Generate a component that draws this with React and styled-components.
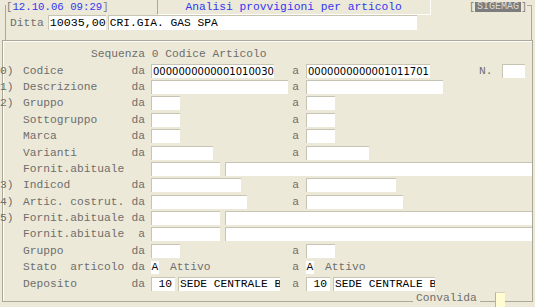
import React from 'react';
import styled, { createGlobalStyle } from 'styled-components';

const MONO = `"Liberation Mono", "Courier New", monospace`;
const SANS = `"DejaVu Sans", Verdana, sans-serif`;

const Global = createGlobalStyle`
  html, body { margin: 0; padding: 0; background: #ece9d8; }
  body { width: 535px; height: 307px; overflow: hidden; }
`;

const Screen = styled.div`
  width: 535px;
  height: 307px;
  overflow: hidden;
  background: #ece9d8;
  font-family: ${MONO};
  font-size: 11.25px;
  color: #6e6e6e;
`;

const HeaderFrame = styled.div`
  margin: 5px 3px 0 5px;
  height: 34px;
  border: 1px solid #aca899;
  border-bottom: none;
`;

const Legend = styled.div`
  display: flex;
  align-items: flex-start;
  height: 15px;
  margin: -6px 4px 0 0;
  background: #ece9d8;
`;

const Stamp = styled.div`
  font-size: 10.7px;
  line-height: 15px;
  color: #808080;
  white-space: pre;
`;

const Blue = styled.span`
  color: #3535f2;
`;

const TitleBox = styled.div`
  box-sizing: border-box;
  width: 274px;
  height: 15px;
  margin-left: 48px;
  border-left: 1px solid #aca899;
  border-right: 1px solid #fdfdfb;
  border-bottom: 1px solid #fdfdfb;
  color: #3535f2;
  text-align: center;
  line-height: 14px;
`;

const Spacer = styled.div`
  flex: 1;
`;

const Tag = styled.div`
  font-size: 10px;
  line-height: 15px;
  color: #808080;
  white-space: pre;
`;

const Hi = styled.span`
  display: inline-block;
  height: 10px;
  line-height: 10px;
  padding: 0 2px;
  background: #7c7c7c;
  color: #d8d8d8;
  vertical-align: 1px;
`;

const DittaRow = styled.div`
  display: flex;
  align-items: center;
  height: 15px;
  padding-left: 4px;
  gap: 2px;
`;

const DittaLabel = styled.span`
  margin-right: 2px;
`;

const MainBox = styled.div`
  position: relative;
  box-sizing: border-box;
  height: 262px;
  margin: 0 2px;
  padding-top: 5px;
  border: 1px solid #aca899;
  box-shadow: inset 1px 1px 0 #fdfdfb;
`;

const Sequence = styled.div`
  height: 16.4px;
  line-height: 16.4px;
  padding-left: 88px;
`;

const Row = styled.div`
  display: flex;
  align-items: center;
  height: 16.4px;
  white-space: pre;
`;

const Num = styled.span`
  flex-shrink: 0;
  width: 23px;
  margin-left: -3px;
`;

const Label = styled.span`
  flex-shrink: 0;
  width: 108px;
`;

const Da = styled.span`
  flex-shrink: 0;
  width: 14px;
  margin-right: 6px;
  text-align: right;
`;

const From = styled.div`
  display: flex;
  align-items: center;
  gap: ${(p) => (p.$wide ? 5 : 3)}px;
  flex: ${(p) => (p.$wide ? '1' : '0 0 135px')};
  width: ${(p) => (p.$wide ? 'auto' : '135px')};
  min-width: 0;
`;

const A = styled.span`
  flex-shrink: 0;
  width: 13px;
  margin-right: 7px;
  text-align: right;
`;

const To = styled.div`
  display: flex;
  align-items: center;
  gap: 3px;
  flex: 1;
  min-width: 0;
`;

const Field = styled.div`
  box-sizing: border-box;
  flex: ${(p) => (p.$grow ? '1' : '0 0 auto')};
  width: ${(p) => (p.$w ? `${p.$w}px` : 'auto')};
  height: ${(p) => (p.$h ? p.$h : 14)}px;
  padding: ${(p) => (p.$right ? '0 3px 0 0' : '0 0 0 1px')};
  background: #ffffff;
  border-top: 1px solid #c8c4b4;
  border-left: 1px solid #c8c4b4;
  font-family: ${(p) => (p.$sans ? SANS : MONO)};
  font-size: ${(p) => (p.$sans ? '10px' : p.$big ? '11.7px' : '11.25px')};
  line-height: ${(p) => (p.$h ? p.$h - 1 : 13)}px;
  color: #000;
  text-align: ${(p) => (p.$right ? 'right' : 'left')};
  white-space: pre;
  overflow: hidden;
`;

const StatusBox = styled.span`
  display: inline-block;
  width: 8px;
  height: 13px;
  line-height: 13px;
  background: #fff;
  color: #111;
  text-align: center;
`;

const StatusText = styled.span`
  margin-left: 8px;
`;

const NLabel = styled.span`
  margin-left: 46px;
  margin-right: 6px;
`;

const Footer = styled.div`
  position: absolute;
  left: 410px;
  top: 251px;
  display: flex;
  align-items: flex-start;
`;

const FooterLabel = styled.span`
  padding: 0 3px;
  line-height: 12px;
  background: #ece9d8;
`;

const Check = styled.div`
  width: 10px;
  height: 15px;
  margin-left: 15px;
  box-sizing: border-box;
  background: #fffbd3;
  border-left: 1px solid #b8b4a4;
  border-top: 1px solid #d4d0c0;
`;

const rows = [
  { num: '0)', label: 'Codice', from: [{ w: 123, v: '0000000000001010030', sans: true }], to: [{ w: 124, v: '0000000000001011701', sans: true }], n: true },
  { num: '1)', label: 'Descrizione', from: [{ w: 137 }], to: [{ w: 137 }] },
  { num: '2)', label: 'Gruppo', from: [{ w: 29 }], to: [{ w: 29 }] },
  { label: 'Sottogruppo', from: [{ w: 29 }], to: [{ w: 29 }] },
  { label: 'Marca', from: [{ w: 29 }], to: [{ w: 29 }] },
  { label: 'Varianti', from: [{ w: 62 }], to: [{ w: 63 }] },
  { label: 'Fornit.abituale', da: '', wide: true },
  { num: '3)', label: 'Indicod', from: [{ w: 90 }], to: [{ w: 90 }] },
  { num: '4)', label: 'Artic. costrut.', from: [{ w: 96 }], to: [{ w: 97 }] },
  { num: '5)', label: 'Fornit.abituale', wide: true },
  { label: 'Fornit.abituale', da: 'a', wide: true },
  { label: 'Gruppo', from: [{ w: 29 }], to: [{ w: 29 }] },
  { label: 'Stato  articolo', status: true },
  { label: 'Deposito', depot: true },
];

function Fields({ list }) {
  return list.map((f, i) => (
    <Field key={i} $w={f.w} $sans={f.sans}>{f.v || ''}</Field>
  ));
}

function Status() {
  return (
    <>
      <StatusBox>A</StatusBox>
      <StatusText>Attivo</StatusText>
    </>
  );
}

function Depot() {
  return (
    <>
      <Field $w={24} $right>10</Field>
      <Field $w={102}>SEDE CENTRALE B</Field>
    </>
  );
}

function FilterRow({ r }) {
  const da = r.da !== undefined ? r.da : 'da';
  if (r.wide) {
    return (
      <Row>
        <Num>{r.num || ''}</Num>
        <Label>{r.label}</Label>
        <Da>{da}</Da>
        <From $wide>
          <Field $w={69} />
          <Field $grow />
        </From>
      </Row>
    );
  }
  return (
    <Row>
      <Num>{r.num || ''}</Num>
      <Label>{r.label}</Label>
      <Da>{da}</Da>
      <From>
        {r.status ? <Status /> : r.depot ? <Depot /> : <Fields list={r.from} />}
      </From>
      <A>a</A>
      <To>
        {r.status ? <Status /> : r.depot ? <Depot /> : <Fields list={r.to} />}
        {r.n && (
          <>
            <NLabel>N.</NLabel>
            <Field $w={23} />
          </>
        )}
      </To>
    </Row>
  );
}

export default function App() {
  return (
    <>
      <Global />
      <Screen>
        <HeaderFrame>
          <Legend>
            <Stamp>[<Blue>12.10.06 09:29</Blue>]</Stamp>
            <TitleBox>Analisi provvigioni per articolo</TitleBox>
            <Spacer />
            <Tag>[<Hi>SIGEMAG</Hi>]</Tag>
          </Legend>
          <DittaRow>
            <DittaLabel>Ditta</DittaLabel>
            <Field $w={58} $h={15} $big>10035,00</Field>
            <Field $w={309} $h={15}>CRI.GIA. GAS SPA</Field>
          </DittaRow>
        </HeaderFrame>
        <MainBox>
          <Sequence>Sequenza 0 Codice Articolo</Sequence>
          {rows.map((r, i) => (
            <FilterRow key={i} r={r} />
          ))}
          <Footer>
            <FooterLabel>Convalida</FooterLabel>
            <Check />
          </Footer>
        </MainBox>
      </Screen>
    </>
  );
}
